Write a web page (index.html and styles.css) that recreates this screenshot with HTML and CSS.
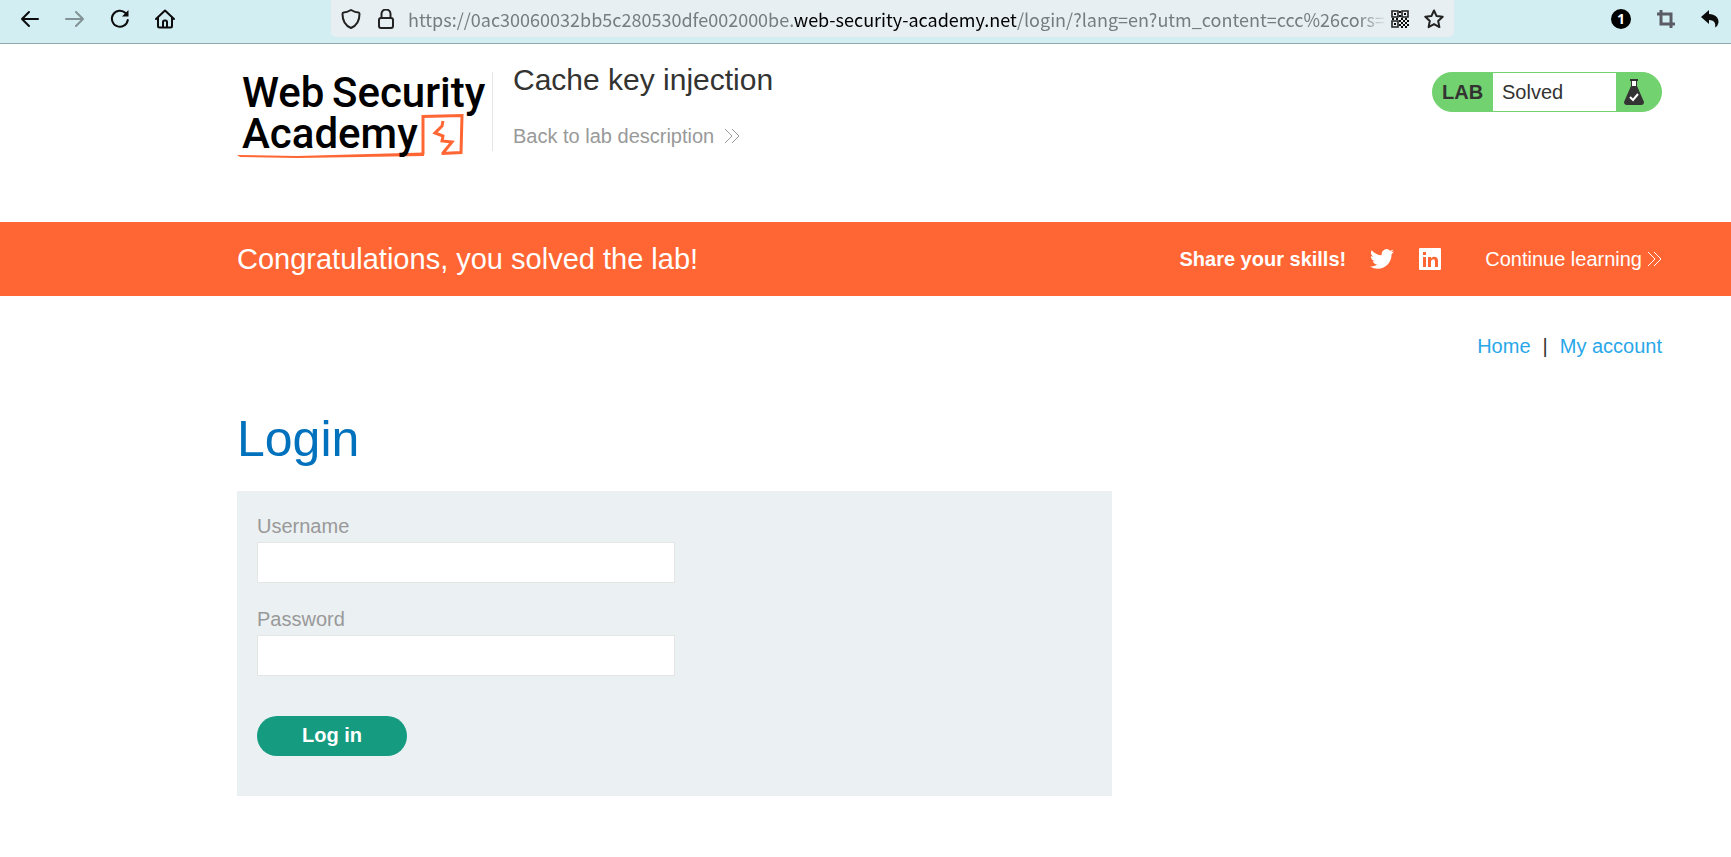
FILE: index.html
```html
<!DOCTYPE html>
<html lang="en">
<head>
<meta charset="utf-8">
<title>Cache key injection</title>
<link rel="stylesheet" href="styles.css">
</head>
<body>
<div class="toolbar">
  <div class="nav">
    <button type="button" aria-label="Back"><svg width="20" height="20" viewBox="0 0 20 20"><path d="M18 10H2M9 3L2 10l7 7"/></svg></button>
    <button type="button" class="dim" aria-label="Forward"><svg width="20" height="20" viewBox="0 0 20 20"><path d="M1 10h17M11 3l7 7-7 7"/></svg></button>
    <button type="button" aria-label="Reload"><svg width="20" height="20" viewBox="0 0 20 20"><path d="M15.500 4A8 8 0 1 0 17.800 11"/><path class="solid" d="M18.500 1v6.500H12z"/></svg></button>
    <button type="button" aria-label="Home"><svg width="20" height="20" viewBox="0 0 20 20"><path d="M1 10L10 1.500 19 10M3 8.500V17q0 1.500 1.500 1.500h11Q17 18.500 17 17V8.500M8 18v-5q0-1.500 1.500-1.500h1Q12 11.500 12 13v5"/></svg></button>
  </div>
  <div class="urlbar">
    <svg width="20" height="20" viewBox="0 0 20 20"><path d="M10 1C7.500 2.500 5 3.500 2.500 3.500Q1.500 3.500 1.500 5C1.500 12 4 16.500 10 19 16 16.500 18.500 12 18.500 5Q18.500 3.500 17.500 3.500C15 3.500 12.500 2.500 10 1z"/></svg>
    <svg width="20" height="20" viewBox="0 0 20 20"><rect x="3" y="9" width="14" height="10" rx="2"/><path d="M5.500 9V5a4.500 4.500 0 0 1 9 0v4"/></svg>
    <div class="url">https://0ac30060032bb5c280530dfe002000be.<b>web-security-academy.net</b>/login/?lang=en?utm_content=ccc%26cors=</div>
    <svg class="qr" width="18" height="18" viewBox="0 0 18 18"><path d="M1 1h6v6H1zM11 1h6v6h-6zM1 11h6v6H1z"/><path class="solid" d="M3 3h2v2H3zM13 3h2v2h-2zM3 13h2v2H3zM8 1h2v2H8zM8 5h2v2H8zM1 8h2v2H1zM5 8h2v2H5zM10 8h2v2h-2zM14 8h2v2h-2zM8 10h2v2H8zM12 10h2v2h-2zM10 12h2v2h-2zM14 12h2v2h-2zM16 10h2v2h-2zM8 14h2v2H8zM12 14h2v2h-2zM16 14h2v2h-2zM14 16h2v2h-2zM10 16h2v2h-2z"/></svg>
    <svg width="20" height="20" viewBox="0 0 20 20"><path d="M10 1.500l2.600 5.600 6.100.7-4.500 4.200 1.200 6.100L10 15.100l-5.400 3 1.200-6.100L1.300 7.800l6.100-.7z"/></svg>
  </div>
  <div class="extensions">
    <span class="count">1</span>
    <svg class="crop" width="18" height="18" viewBox="0 0 18 18"><path d="M4 0v14h14M0 4h14v14"/></svg>
    <svg class="reply" width="18" height="18" viewBox="0 0 18 18"><path class="solid" d="M8 0v4c6 0 10 4 9.500 8.500Q17 16 14 17.500C15 13 13 10 8 10v4L0 7z"/></svg>
  </div>
</div>

<header class="header">
  <svg class="logo" width="251" height="90" viewBox="0 0 251 90" role="img" aria-label="Web Security Academy">
    <path class="mark" d="M186 84.500V46.500L225 45.500 224 82.500 204.500 83.500M206 51L205 56 198 63 206 66 205 71 215 72 206 83"/>
    <path class="underline" d="M0 85L60 86 187 82.500V86L60 88 3 87z"/>
    <text><tspan x="5" y="37">Web</tspan><tspan x="95">Security</tspan><tspan x="5" y="78">Academy</tspan></text>
  </svg>
  <div class="intro">
    <h2>Cache key injection</h2>
    <a href="#">Back to lab description <svg width="16" height="16" viewBox="0 0 16 16"><path d="M1 1l7 7-7 7M8 1l7 7-7 7"/></svg></a>
  </div>
  <div class="status">
    <strong>LAB</strong>
    <span>Solved</span>
    <svg width="20" height="26" viewBox="0 0 20 26"><path fill="#fff" d="M7 2h6v6H7z"/><path fill="none" stroke="#333" d="M7.500 2v6M12.500 2v6"/><path fill="#333" d="M6 0h8v2H6zM7 7h6l7 16q0 3-3 3H3q-3 0-3-3z"/><path fill="none" stroke="#fff" stroke-width="2" d="M6 18l3 3 5-6"/></svg>
  </div>
</header>

<section class="banner">
  <h4>Congratulations, you solved the lab!</h4>
  <strong>Share your skills!</strong>
  <a class="twitter" href="#" aria-label="Twitter"><svg width="24" height="24" viewBox="0 0 24 24"><path fill="#fff" d="M23.950 4.570a10 10 0 0 1-2.820.77 4.960 4.960 0 0 0 2.160-2.720c-.95.550-2 .96-3.120 1.190a4.920 4.920 0 0 0-8.390 4.480C7.690 8.090 4.070 6.130 1.640 3.160a4.820 4.820 0 0 0-.67 2.480c0 1.710.87 3.210 2.190 4.100a4.900 4.900 0 0 1-2.230-.62v.060a4.920 4.920 0 0 0 3.950 4.830 5 5 0 0 1-2.210.080 4.940 4.940 0 0 0 4.600 3.420A9.870 9.870 0 0 1 0 19.540a14 14 0 0 0 7.550 2.210c9.050 0 14-7.500 14-13.980 0-.21 0-.42-.02-.63a9.940 9.940 0 0 0 2.420-2.570z"/></svg></a>
  <a class="linkedin" href="#" aria-label="LinkedIn"><svg width="22" height="22" viewBox="0 0 22 22"><rect width="22" height="22" rx="1" fill="#fff"/><path fill="#f63" d="M4 9h3v10H4zM4 4h3v3H4zM9 9h3v1.500Q13 8.700 15 8.700q4 0 4 4.300v6h-3v-5.500q0-2.300-1.800-2.300-2.200 0-2.200 2.500V19H9z"/></svg></a>
  <a class="continue" href="#">Continue learning <svg width="14" height="16" viewBox="0 0 14 16"><path d="M0 1l7 7-7 7M6 1l7 7-7 7"/></svg></a>
</section>

<main>
  <nav class="links"><a href="#">Home</a><span>|</span><a href="#">My account</a></nav>
  <h1>Login</h1>
  <form class="login">
    <label for="username">Username</label>
    <input id="username" type="text">
    <label for="password">Password</label>
    <input id="password" type="password">
    <button type="button">Log in</button>
  </form>
</main>
</body>
</html>
```

FILE: styles.css
```css
* { box-sizing: border-box; }
body { margin: 0; background: #fff; color: #333332; font: 20px/30px "Liberation Sans", Arial, sans-serif; }
a { text-decoration: none; }
svg { display: block; flex: none; }
h1, h2, h4 { margin: 0; font-weight: 400; }

.toolbar { display: flex; height: 44px; padding: 0 12px 0 20px; background: #d2eef2; border-bottom: 1px solid #93a9ae; }
.toolbar svg { fill: none; stroke: #0c0c0d; stroke-width: 2; stroke-linejoin: round; stroke-linecap: round; }
.toolbar .solid { fill: #0c0c0d; stroke: none; }
.nav { display: flex; flex: none; gap: 25px; width: 311px; height: 37px; align-items: center; }
.nav button { padding: 0; border: 0; background: none; }
.nav .dim { opacity: .4; }
.urlbar { display: flex; flex: 1; min-width: 0; align-items: center; gap: 15px; height: 37px; padding: 0 10px; background: #e8eff2; border-radius: 0 0 5px 5px; }
.urlbar svg { stroke: #222; }
.toolbar .qr { stroke-width: 1.6; stroke-linejoin: miter; }
.url { flex: 1; min-width: 0; margin: 0 -12px 0 -3px; overflow: hidden; white-space: nowrap; color: #777c7f; font: 18px/34px "Noto Sans CJK SC", "Noto Sans", sans-serif; -webkit-mask-image: linear-gradient(to left, transparent, #000 30px); mask-image: linear-gradient(to left, transparent, #000 30px); }
.url b { color: #000; font-weight: 400; }
.extensions { display: flex; flex: none; align-items: center; justify-content: flex-end; gap: 26px; width: 265px; height: 37px; }
.count { width: 20px; height: 20px; border-radius: 50%; background: #000; color: #fff; font: bold 14px/20px "Open Sans", sans-serif; text-align: center; }
.toolbar .crop { stroke: #5b5b66; stroke-width: 3; stroke-linecap: butt; stroke-linejoin: miter; }

.header, .banner, main { padding: 0 69px 0 237px; }
.header { display: flex; align-items: flex-start; height: 178px; padding-top: 26px; }
.logo { overflow: visible; }
.logo text { font: 500 42px Roboto, sans-serif; fill: #000; }
.mark { fill: none; stroke: #f63; stroke-width: 3; }
.underline { fill: #f63; }
.intro { height: 79px; margin: 2px auto 0 4px; padding-left: 20px; border-left: 1px solid #e5e5e5; }
.intro h2 { margin-top: -10px; font-size: 30px; line-height: 36px; }
.intro a { display: flex; align-items: center; gap: 10px; margin-top: 23px; color: #999; }
.intro svg, .continue svg { fill: none; stroke: currentColor; }
.status { display: flex; align-items: center; width: 230px; height: 40px; margin-top: 2px; border: 1px solid #71d26f; border-radius: 20px; background: #71d26f; overflow: hidden; }
.status strong { width: 60px; padding-left: 9px; }
.status span { width: 123px; padding-left: 9px; background: #fff; line-height: 38px; }
.status svg { margin-left: 8px; }

.banner { display: flex; align-items: center; height: 74px; background: #f63; color: #fff; }
.banner a { color: #fff; }
.banner h4 { margin-right: auto; font-size: 29px; }
.twitter { margin-left: 24px; }
.linkedin { margin-left: 25px; }
.continue { display: flex; align-items: center; gap: 6px; margin-left: 44px; }

.links { display: flex; justify-content: flex-end; gap: 12px; padding-top: 35px; }
.links a { color: #29a7e8; }
h1 { margin-top: 48px; color: #0071bd; font-size: 50px; line-height: 60px; }
.login { display: flex; flex-direction: column; align-items: flex-start; width: 100%; max-width: 875px; margin-top: 22px; padding: 20px 20px 40px; background: #ebf0f2; }
.login label { color: #999; line-height: 31px; }
.login input { width: 50%; height: 41px; margin-bottom: 21px; padding: 0 10px; border: 1px solid #e4e6e6; background: #fff; font: inherit; }
.login button { width: 150px; height: 40px; margin-top: 19px; padding: 0 0 2px; border: 0; border-radius: 20px; background: #159b80; color: #fff; font: bold 20px "Liberation Sans", Arial, sans-serif; }
```
